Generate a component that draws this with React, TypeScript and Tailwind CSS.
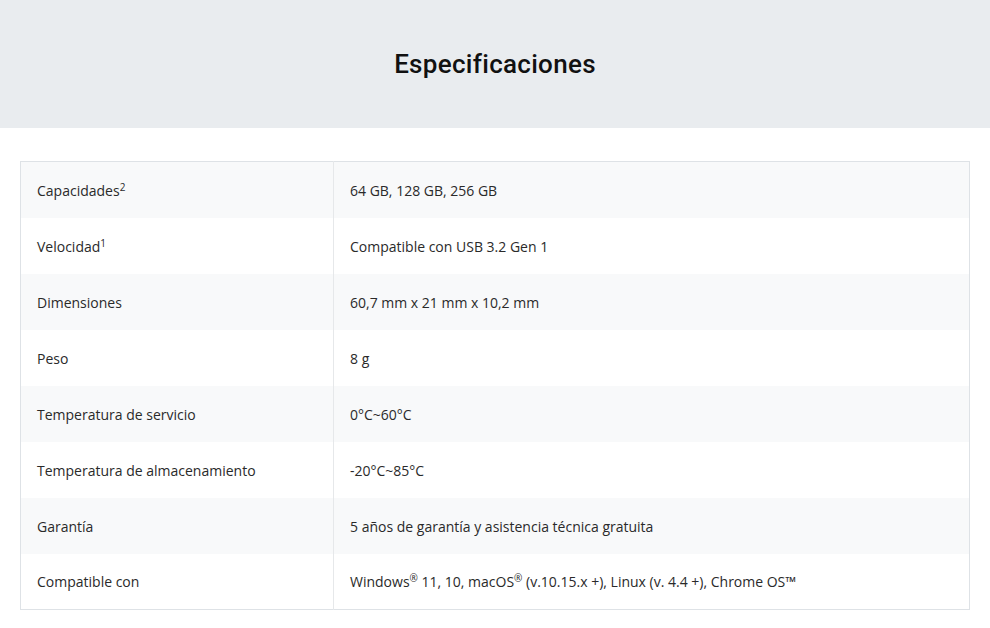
import React from 'react';

const rows: { label: React.ReactNode; value: React.ReactNode }[] = [
  { label: <>Capacidades<sup className="text-[10px]">2</sup></>, value: '64 GB, 128 GB, 256 GB' },
  { label: <>Velocidad<sup className="text-[10px]">1</sup></>, value: 'Compatible con USB 3.2 Gen 1' },
  { label: 'Dimensiones', value: '60,7 mm x 21 mm x 10,2 mm' },
  { label: 'Peso', value: '8 g' },
  { label: 'Temperatura de servicio', value: '0°C~60°C' },
  { label: 'Temperatura de almacenamiento', value: '-20°C~85°C' },
  { label: 'Garantía', value: '5 años de garantía y asistencia técnica gratuita' },
  {
    label: 'Compatible con',
    value: (
      <>
        Windows<sup className="text-[10px]">®</sup> 11, 10, macOS<sup className="text-[10px]">®</sup> (v.10.15.x +), Linux (v. 4.4 +), Chrome OS™
      </>
    ),
  },
];

export default function App() {
  return (
    <div className="min-h-screen bg-white font-['Open_Sans',sans-serif] text-[#2a2a2a]">
      <div className="h-32 bg-[#e9ecef] flex items-center justify-center">
        <h1 className="font-['Roboto',sans-serif] font-medium text-[26px] text-[#111] tracking-[0.3px]">Especificaciones</h1>
      </div>
      <div className="px-5 pt-[33px]">
        <table className="w-full border-collapse border border-[#dee2e6] text-[14px]">
          <tbody>
            {rows.map((r, i) => (
              <tr key={i} className={i % 2 === 0 ? 'bg-[#f8f9fa]' : 'bg-white'}>
                <td className="h-14 w-[313px] px-4 pt-[1px] border-r border-[#e6e8ea] align-middle">{r.label}</td>
                <td className="h-14 px-4 pt-[1px] align-middle">{r.value}</td>
              </tr>
            ))}
          </tbody>
        </table>
      </div>
    </div>
  );
}
